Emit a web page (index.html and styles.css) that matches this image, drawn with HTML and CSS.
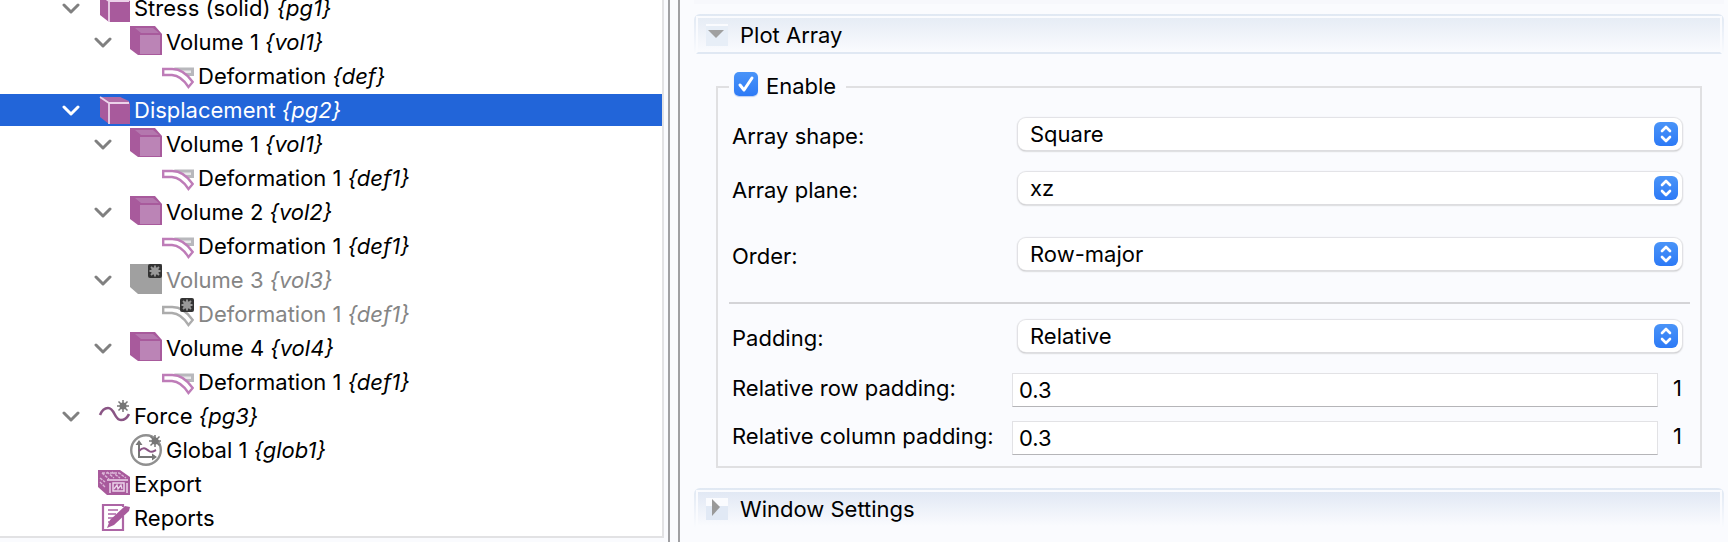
FILE: index.html
```html
<!DOCTYPE html>
<html lang="en">
<head>
<meta charset="utf-8">
<title>Plot settings</title>
<link rel="stylesheet" href="styles.css">
</head>
<body>
<svg class="sprite" aria-hidden="true">
  <symbol id="chevron" viewBox="0 0 18 32"><path d="M2 13l7 7 7-7" fill="none" stroke="currentColor" stroke-width="3" stroke-linecap="round" stroke-linejoin="round"/></symbol>
  <symbol id="group" viewBox="0 0 32 32">
    <path d="M2 3h20l10 6v21H11l-9-7z" fill="#a85a9c"/>
    <path d="M4 4l8 4h19v-1l-9-4H4z" fill="#b06aa6"/>
    <path d="M2 3l9 6H31M11 9V30" fill="none" stroke="#ecd3ea" stroke-width="1.800"/>
  </symbol>
  <symbol id="volume" viewBox="0 0 32 32">
    <path d="M0 0h25l7 8v21H8l-8-6z" fill="#a85a9c"/>
    <path d="M5 2h18l6 5H11z" fill="#b477ae"/>
    <path d="M10 9h20v19H10z" fill="#bb84b6"/>
  </symbol>
  <symbol id="deform" viewBox="0 0 32 32">
    <path d="M12 7.500h20V16H22z" fill="#b8b8bc"/>
    <path d="M16 10.500h13v2.500H20z" fill="#e8e8ea"/>
    <path d="M1.200 9h9c8 0 15 5 20.500 13L26.500 27C22 20 17 15.500 10 15H1.200z" fill="#fff" stroke="#be7cb8" stroke-width="2.400"/>
  </symbol>
  <symbol id="badge" viewBox="0 0 14 14">
    <rect width="14" height="14" rx="2" fill="#333"/>
    <path d="M7 1.500v11M1.500 7h11M3 3l8 8M11 3l-8 8" stroke="#999" stroke-width="1.800"/><circle cx="7" cy="7" r="3.800" fill="#999"/>
  </symbol>
  <symbol id="star" viewBox="0 0 14 14"><path d="M7 1v12M1 7h12M2.500 2.500l9 9M11.500 2.500l-9 9" stroke="#777" stroke-width="1.500"/><circle cx="7" cy="7" r="3.500" fill="#777"/></symbol>
  <symbol id="volume-off" viewBox="0 0 32 32"><path d="M0 0h32v30H8l-8-7z" fill="#a0a0a0"/><use href="#badge" x="18" y="0" width="14" height="14"/></symbol>
  <symbol id="deform-off" viewBox="0 0 32 32">
    <path d="M1.200 9h9c8 0 15 5 20.500 13L26.500 27C22 20 17 15.500 10 15H1.200z" fill="#fff" stroke="#acacac" stroke-width="2.400"/>
    <use href="#badge" x="18" y="0" width="14" height="14"/>
  </symbol>
  <symbol id="curve" viewBox="0 0 32 32"><path d="M2 15c2-5 5-7 8-7 7 0 6 12 13 12 4 0 6-2 8-6" fill="none" stroke="#8a5585" stroke-width="2.600"/><use href="#star" x="18" y="-1" width="14" height="14"/></symbol>
  <symbol id="global" viewBox="0 0 32 32">
    <circle cx="16" cy="16" r="14.800" fill="none" stroke="#909090" stroke-width="2.400"/>
    <path d="M9 8v15h16" fill="none" stroke="#777" stroke-width="2"/><path d="M5.500 11L9 6l3.500 5zM22 19.500l5 3.500-5 3.500z" fill="#777"/>
    <path d="M9 17c5-5 7-2 10 0s5 0 7-1" fill="none" stroke="#8a5585" stroke-width="2"/>
    <use href="#star" x="18" y="0" width="14" height="14"/>
  </symbol>
  <symbol id="export" viewBox="0 0 32 32">
    <path d="M0 2h22l10 7v18H9L0 19z" fill="#a85a9c"/>
    <path d="M4 5h17l7 5M4 5l7 6M9 4l7 6M14 4l8 6M2 10l5 4M2 14l5 5" fill="none" stroke="#dcb6d8" stroke-width="1.400" stroke-dasharray="3 1"/>
    <path d="M9 12h21M12 15v10M29 15v10M15 15h11v8H15z" fill="none" stroke="#ecd3ea" stroke-width="1.500"/>
    <path d="M16 21l3-4 1 4 3-4 1 4" fill="none" stroke="#ecd3ea" stroke-width="1.300"/>
  </symbol>
  <symbol id="report" viewBox="0 0 32 32">
    <path d="M25 14v14H5V3h20v2" fill="#fff" stroke="#ad65a5" stroke-width="2.200"/>
    <path d="M10 8h10M10 12h8M10 16h6M10 20h3" stroke="#ad65a5" stroke-width="1.600"/>
    <path d="M9 26l3-8L27 4l5 1-1 4-15 14z" fill="#a85a9c"/>
  </symbol>
</svg>
<main class="app">
  <nav class="tree-pane" aria-label="Model tree">
    <ul class="tree">
      <li class="node"><button class="toggle" aria-label="Collapse"><svg><use href="#chevron"/></svg></button><svg class="icon"><use href="#group"/></svg><span>Stress (solid) <i>{pg1}</i></span></li>
      <li class="node level-2"><button class="toggle" aria-label="Collapse"><svg><use href="#chevron"/></svg></button><svg class="icon"><use href="#volume"/></svg><span>Volume 1 <i>{vol1}</i></span></li>
      <li class="node level-3"><svg class="icon"><use href="#deform"/></svg><span>Deformation <i>{def}</i></span></li>
      <li class="node selected"><button class="toggle" aria-label="Collapse"><svg><use href="#chevron"/></svg></button><svg class="icon"><use href="#group"/></svg><span>Displacement <i>{pg2}</i></span></li>
      <li class="node level-2"><button class="toggle" aria-label="Collapse"><svg><use href="#chevron"/></svg></button><svg class="icon"><use href="#volume"/></svg><span>Volume 1 <i>{vol1}</i></span></li>
      <li class="node level-3"><svg class="icon"><use href="#deform"/></svg><span>Deformation 1 <i>{def1}</i></span></li>
      <li class="node level-2"><button class="toggle" aria-label="Collapse"><svg><use href="#chevron"/></svg></button><svg class="icon"><use href="#volume"/></svg><span>Volume 2 <i>{vol2}</i></span></li>
      <li class="node level-3"><svg class="icon"><use href="#deform"/></svg><span>Deformation 1 <i>{def1}</i></span></li>
      <li class="node level-2 disabled"><button class="toggle" aria-label="Collapse"><svg><use href="#chevron"/></svg></button><svg class="icon"><use href="#volume-off"/></svg><span>Volume 3 <i>{vol3}</i></span></li>
      <li class="node level-3 disabled"><svg class="icon"><use href="#deform-off"/></svg><span>Deformation 1 <i>{def1}</i></span></li>
      <li class="node level-2"><button class="toggle" aria-label="Collapse"><svg><use href="#chevron"/></svg></button><svg class="icon"><use href="#volume"/></svg><span>Volume 4 <i>{vol4}</i></span></li>
      <li class="node level-3"><svg class="icon"><use href="#deform"/></svg><span>Deformation 1 <i>{def1}</i></span></li>
      <li class="node"><button class="toggle" aria-label="Collapse"><svg><use href="#chevron"/></svg></button><svg class="icon"><use href="#curve"/></svg><span>Force <i>{pg3}</i></span></li>
      <li class="node level-2 leaf"><svg class="icon"><use href="#global"/></svg><span>Global 1 <i>{glob1}</i></span></li>
      <li class="node leaf"><svg class="icon"><use href="#export"/></svg><span>Export</span></li>
      <li class="node leaf"><svg class="icon"><use href="#report"/></svg><span>Reports</span></li>
    </ul>
  </nav>
  <div class="splitter"></div>
  <div class="settings">
    <div class="section-tail"></div>
    <section class="section">
      <h2 class="section-head open"><button class="section-button" aria-expanded="true"><svg class="twisty" viewBox="0 0 22 22"><path fill="#fafbfe" d="M0 0h22v2H0z"/><path fill="#e7eef7" d="M0 2h22v20H0z"/><path fill="#a0a0a0" d="M2 6h16l-8 8z"/></svg>Plot Array</button></h2>
      <fieldset class="group">
        <legend class="legend"><span class="check"><input type="checkbox" id="enable" checked><svg viewBox="0 0 24 24"><path d="M6 13l4 5 8-12" fill="none" stroke="#fff" stroke-width="3" stroke-linecap="round" stroke-linejoin="round"/></svg></span><label for="enable">Enable</label></legend>
        <div class="row"><label for="shape">Array shape:</label><span class="select"><select id="shape"><option>Square</option></select><svg viewBox="0 0 24 24"><path d="M8 9l4-4 4 4M8 15l4 4 4-4"/></svg></span></div>
        <div class="row"><label for="plane">Array plane:</label><span class="select"><select id="plane"><option>xz</option></select><svg viewBox="0 0 24 24"><path d="M8 9l4-4 4 4M8 15l4 4 4-4"/></svg></span></div>
        <div class="row spaced"><label for="order">Order:</label><span class="select"><select id="order"><option>Row-major</option></select><svg viewBox="0 0 24 24"><path d="M8 9l4-4 4 4M8 15l4 4 4-4"/></svg></span></div>
        <hr class="rule">
        <div class="row"><label for="padding">Padding:</label><span class="select"><select id="padding"><option>Relative</option></select><svg viewBox="0 0 24 24"><path d="M8 9l4-4 4 4M8 15l4 4 4-4"/></svg></span></div>
        <div class="row number"><label for="row-padding">Relative row padding:</label><input type="text" id="row-padding" value="0.3"><span class="unit">1</span></div>
        <div class="row number last"><label for="column-padding">Relative column padding:</label><input type="text" id="column-padding" value="0.3"><span class="unit">1</span></div>
      </fieldset>
    </section>
    <section class="section">
      <h2 class="section-head"><button class="section-button" aria-expanded="false"><svg class="twisty" viewBox="0 0 22 22"><path fill="#fafbfe" d="M0 0h22v8H0z"/><path fill="#e1e9f5" d="M0 8h22v14H0z"/><path fill="#999" d="M6 1v17l8-9z"/></svg>Window Settings</button></h2>
    </section>
  </div>
</main>
</body>
</html>
```

FILE: styles.css
```css
* { box-sizing: border-box; }
body { margin: 0; background: #fafbfe; color: #000; font: 22px/26px Inter, "Liberation Sans", sans-serif; }
button, input, select { font: inherit; color: inherit; }
.sprite { position: absolute; width: 0; height: 0; }
.app { display: flex; height: 100vh; overflow: hidden; }

.tree-pane { flex: 0 0 664px; display: flex; padding-bottom: 4px; }
.tree {
  flex: 1; display: flex; flex-direction: column; justify-content: flex-end; gap: 2px;
  margin: 0; padding: 0 0 2px; list-style: none; overflow: hidden;
  background: #fff; border: solid #e2e2e4; border-width: 0 2px 2px 0;
}
.node { flex: none; display: flex; align-items: center; height: 32px; padding-left: 62px; white-space: pre; }
.level-2 { padding-left: 94px; }
.level-3 { padding-left: 162px; }
.leaf { padding-left: 98px; }
.level-2.leaf { padding-left: 130px; }
.toggle { width: 18px; height: 32px; margin: 0 18px 0 0; padding: 0; border: 0; background: none; color: #808080; }
.toggle svg { display: block; width: 18px; height: 32px; }
.icon { width: 32px; height: 32px; margin-right: 4px; }
.selected { background: #2265d9; color: #fff; }
.selected .toggle { color: #fff; }
.disabled { color: #858585; }

.splitter { flex: none; width: 12px; margin-left: 4px; border: solid #a0a0a3; border-width: 0 2px; }

.settings { flex: 1; padding: 0 4px 0 14px; }
.section-tail { height: 4px; margin-bottom: 10px; background: #f7f8fc; }
.section { margin-bottom: 20px; }
.section-head {
  margin: 0; font-size: inherit; font-weight: 400; height: 40px;
  border: 2px solid transparent; border-radius: 6px 6px 0 0;
  background: linear-gradient(#e0e8f3, #fafbfe) border-box;
}
.section-button {
  display: flex; align-items: center; gap: 12px; width: 100%; height: 38px; padding: 0 0 0 8px;
  border: 2px solid #fafbfe; text-align: left;
  background: linear-gradient(#e1e8f4, #fafbfe);
}
.open .section-button { background: linear-gradient(#e6ecf5, #fafbfe); border-bottom-color: #e0e8f3; }
.twisty { width: 22px; height: 22px; }

.group { margin: 18px 22px 0; padding: 16px 10px 11px 11px; border: 2px solid #e0e0e2; }
.legend { display: flex; gap: 8px; height: 30px; padding: 0 10px 0 5px; }
.legend label { padding-top: 1px; }
.check, .select { display: grid; }
.check > *, .select > * { grid-area: 1 / 1; }
.check { width: 24px; height: 24px; }
.check input { appearance: none; width: 24px; height: 24px; margin: 0; border-radius: 5px; background: linear-gradient(#4a94f8, #2d7af6); box-shadow: 0 1px 1px #b9cdf2; }
.check svg, .select svg { pointer-events: none; }
.row { display: flex; align-items: center; padding: 0 8px 0 3px; margin-bottom: 22px; }
.row label { flex: 0 0 286px; padding-top: 3px; }
.spaced { margin: 34px 0 32px; }
.rule { height: 2px; margin: 0 0 16px; border: 0; background: #d4d4d7; }
.rule + .row { margin-bottom: 21px; }
.select { flex: 1; align-items: center; }
.select select {
  appearance: none; width: 100%; height: 32px; padding: 0 40px 1px 12px; border: 0; border-radius: 8px; background: #fff;
  box-shadow: 0 0 1px 1px #e2e2e5, 0 1px 2px #999;
}
.select svg {
  justify-self: end; width: 24px; height: 24px; margin-right: 4px; border-radius: 6px;
  background: linear-gradient(#4a94f8, #2d7af6); fill: none; stroke: #fff; stroke-width: 2.6; stroke-linecap: round; stroke-linejoin: round;
}
.row.number { margin-bottom: 14px; }
.row.last { margin-bottom: 0; }
.number label { flex-basis: 280px; padding: 0 0 4px; }
.number input { flex: 1; min-width: 0; height: 34px; padding: 0 6px; border: 1px solid #e2e2e5; border-bottom-color: #b5b5b8; border-radius: 0; background: #fff; }
.unit { width: 24px; text-align: right; padding-bottom: 4px; }
```
